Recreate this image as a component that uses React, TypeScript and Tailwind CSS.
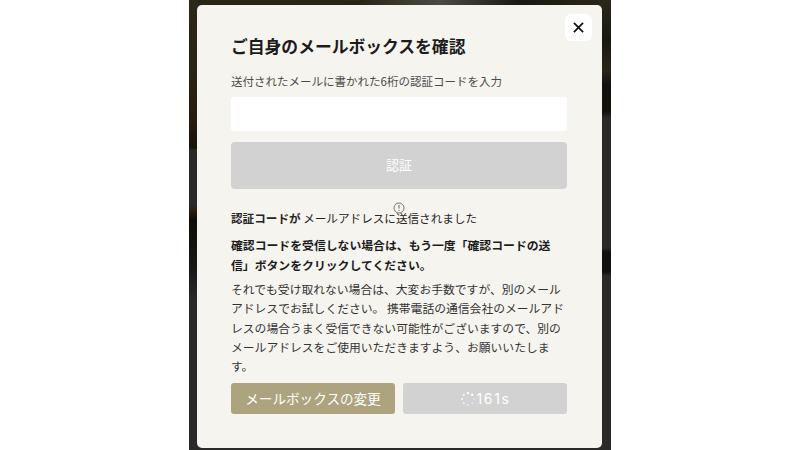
import React from "react";

const font = { fontFamily: '"Noto Sans CJK JP", "Noto Sans", sans-serif' };

function Spinner() {
  const dots = [0, 45, 90, 135, 180, 225, 270, 315];
  return (
    <svg width="16" height="16" viewBox="0 0 16 16" className="shrink-0">
      {dots.map((a, i) => (
        <circle
          key={a}
          cx={8 + 6 * Math.cos((a * Math.PI) / 180)}
          cy={8 + 6 * Math.sin((a * Math.PI) / 180)}
          r={0.7 + i * 0.08}
          fill="#ffffff"
          opacity={0.75 + i * 0.035}
        />
      ))}
    </svg>
  );
}

export default function App() {
  return (
    <div className="flex h-[450px] w-[800px] justify-center overflow-hidden bg-white" style={font}>
      <div className="flex h-full w-[422px] bg-[#2a2a29]">
        <div className="h-full w-2 shrink-0 bg-[linear-gradient(to_bottom,#2b2818_0px,#2a2412_70px,#291b0c_120px,#17120a_148px,#2a2a2a_150px,#2a2a2a_205px,#2b1f10_210px,#100c08_220px,#1a1815_270px,#2a2a2a_300px,#2a2a2a_450px)]" />
        <div className="flex min-w-0 flex-1 flex-col">
          <div className="h-[5px] shrink-0 bg-[linear-gradient(to_right,#2a2616_0%,#2a2414_40%,#4a4a46_60%,#1a1812_80%,#2a2616_100%)]" />
          <div className="relative h-[443px] rounded-[5px] bg-[#f6f4ef] pl-[34px] pr-[35px] pt-[30px]">
            <button className="absolute right-[10px] top-[9px] flex h-[27px] w-[27px] items-center justify-center rounded-[6px] bg-white">
              <svg width="11" height="11" viewBox="0 0 12 12" fill="none" stroke="#111" strokeWidth="1.9">
                <path d="M1 1l10 10M11 1L1 11" />
              </svg>
            </button>
            <h1 className="text-[16.8px] font-bold leading-[22px] text-[#1c1c1c]">ご自身のメールボックスを確認</h1>
            <p className="mt-[15px] text-[11.5px] leading-[18px] text-[#4c4c4c]">送付されたメールに書かれた6桁の認証コードを入力</p>
            <div className="mt-[7px] h-[34px] rounded-[3px] bg-white" />
            <button className="mt-[11px] flex h-[47px] w-full items-center justify-center rounded-[4px] bg-[#d2d2d2] pb-[2px] text-[13px] text-white">
              認証
            </button>
            <div className="relative mt-[20px] text-[11.6px] leading-[18px] text-[#262626]">
              <svg width="12" height="12" viewBox="0 0 12 12" fill="none" className="absolute left-[162px] top-[-7px]">
                <circle cx="6" cy="6" r="5" stroke="#555" strokeWidth="0.8" />
                <path d="M6 3v3.6M6 8v1" stroke="#555" strokeWidth="0.9" />
              </svg>
              <b className="font-bold">認証コードが</b> メールアドレスに送信されました
            </div>
            <p className="mt-[8px] text-[11.85px] font-bold leading-[19.5px] text-[#1c1c1c]">
              確認コードを受信しない場合は、もう一度「確認コードの送信」ボタンをクリックしてください。
            </p>
            <p className="mt-[5px] text-[11.8px] font-normal leading-[19.25px] text-[#333]">
              それでも受け取れない場合は、大変お手数ですが、別のメールアドレスでお試しください。 携帯電話の通信会社のメールアドレスの場合うまく受信できない可能性がございますので、別のメールアドレスをご使用いただきますよう、お願いいたします。
            </p>
            <div className="mt-[8px] grid grid-cols-2 gap-[8px]">
              <button className="flex h-[31px] items-center justify-center rounded-[3px] bg-[#ada37e] pb-[2px] text-[13.6px] text-white">
                メールボックスの変更
              </button>
              <button className="flex h-[31px] items-center justify-center gap-[1px] rounded-[3px] bg-[#d2d2d2] font-['Inter'] text-[14px] tracking-[1.6px] text-white">
                <Spinner />
                161s
              </button>
            </div>
          </div>
        </div>
        <div className="h-full w-[9px] shrink-0 bg-[linear-gradient(to_bottom,#2b2818_0px,#1a1710_40px,#2a2616_70px,#111_85px,#15120c_112px,#2a2a29_118px,#2a2a29_248px,#111_252px,#111_272px,#2a2a29_276px,#2a2a29_450px)]" />
      </div>
    </div>
  );
}
